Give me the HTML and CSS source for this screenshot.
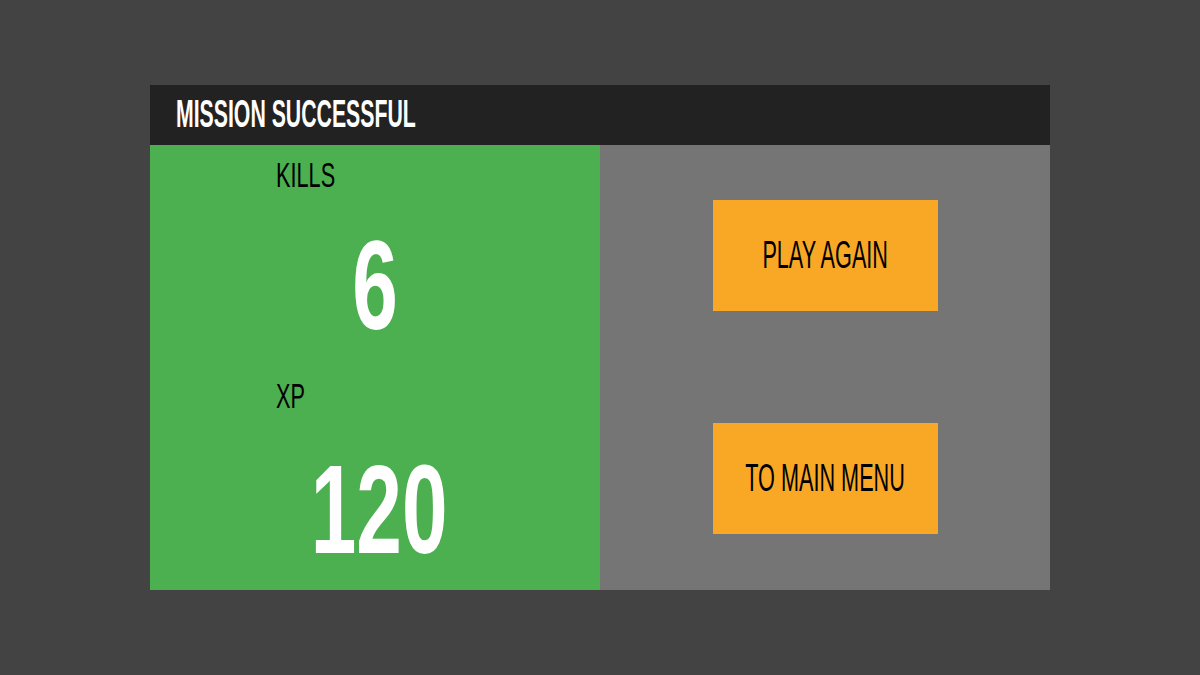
FILE: index.html
```html
<!DOCTYPE html>
<html lang="en">
<head>
  <meta charset="UTF-8">
  <meta name="viewport" content="width=device-width, initial-scale=1.0">
  <title>Mission Successful</title>
  <link rel="stylesheet" href="styles.css">
</head>
<body>
  <div class="panel">
    <div class="panel-header">
      <h1 class="title"><span>MISSION SUCCESSFUL</span></h1>
    </div>
    <div class="panel-body">
      <div class="stats">
        <div class="stat-label"><span>KILLS</span></div>
        <div class="stat-value kills"><span>6</span></div>
        <div class="stat-label xp"><span>XP</span></div>
        <div class="stat-value score"><span>120</span></div>
      </div>
      <div class="actions">
        <button class="action-btn"><span>PLAY AGAIN</span></button>
        <button class="action-btn"><span>TO MAIN MENU</span></button>
      </div>
    </div>
  </div>
</body>
</html>
```

FILE: styles.css
```css
body {
  margin: 0;
  background-color: #434343;
  font-family: "Liberation Sans", Arial, sans-serif;
}
.panel {
  width: 900px;
  margin: 85px auto 0 auto;
}
.panel-header {
  height: 60px;
  background-color: #222222;
  display: flex;
  align-items: center;
  padding-left: 26px;
  padding-bottom: 3px;
  box-sizing: border-box;
}
.title {
  margin: 0;
  font-size: 39px;
  font-weight: bold;
  line-height: 1;
  color: #ffffff;
}
/* condensed look: squeeze glyphs horizontally */
.title span {
  display: inline-block;
  transform: scaleX(0.545);
  transform-origin: left center;
  white-space: nowrap;
}
.panel-body {
  display: flex;
  height: 445px;
}
.stats {
  width: 450px;
  background-color: #4caf50;
}
.stat-label {
  margin-top: 12px;
  padding-left: 126px;
  font-size: 35px;
  line-height: 35px;
  height: 35px;
  color: #000000;
}
.stat-label span {
  display: inline-block;
  transform: scaleX(0.62);
  transform-origin: left center;
}
.stat-label.xp {
  margin-top: 29px;
}
.stat-value {
  text-align: center;
  font-size: 126px;
  line-height: 126px;
  height: 126px;
  font-weight: bold;
  color: #ffffff;
  margin-top: 31px;
}
.stat-value span {
  display: inline-block;
  transform: scaleX(0.65);
}
.stat-value.score {
  margin-top: 34px;
  padding-left: 8px;
}
.actions {
  width: 450px;
  background-color: #757575;
  display: flex;
  flex-direction: column;
  justify-content: space-between;
  align-items: center;
  padding: 55px 0 56px 0;
  box-sizing: border-box;
}
.action-btn {
  width: 225px;
  height: 111px;
  background-color: #f9a825;
  border: none;
  padding: 0;
  display: flex;
  justify-content: center;
  align-items: center;
  font-family: inherit;
  font-size: 38px;
  color: #000000;
  cursor: pointer;
  white-space: nowrap;
}
.action-btn span {
  display: inline-block;
  flex-shrink: 0;
  transform: scaleX(0.57);
}
```
